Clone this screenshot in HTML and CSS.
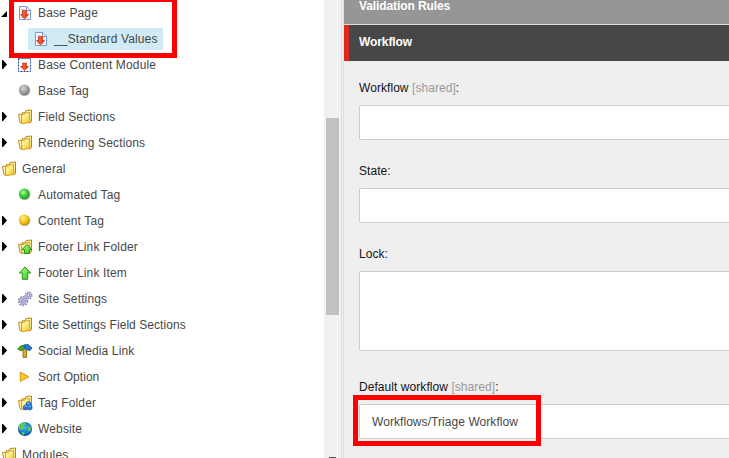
FILE: index.html
```html
<!DOCTYPE html>
<html lang="en">
<head>
<meta charset="utf-8">
<title>Content Editor</title>
<link rel="stylesheet" href="styles.css">
</head>
<body>
<svg class="defs" aria-hidden="true">
  <defs>
    <linearGradient id="gold" x1="0" y1="0" x2="1" y2="1"><stop offset="0" stop-color="#fffbd0"/><stop offset=".5" stop-color="#ffe878"/><stop offset="1" stop-color="#eeb814"/></linearGradient>
    <linearGradient id="red" x1="0" y1="0" x2="1" y2="0"><stop offset="0" stop-color="#d01c0c"/><stop offset=".45" stop-color="#ff6328"/><stop offset="1" stop-color="#b80d05"/></linearGradient>
    <linearGradient id="lime" x1="0" y1="0" x2="1" y2="1"><stop offset="0" stop-color="#b4ff78"/><stop offset="1" stop-color="#35c51d"/></linearGradient>
    <radialGradient id="grayBall" cx=".4" cy=".35" r=".65"><stop offset="0" stop-color="#d4d4d4"/><stop offset=".6" stop-color="#a0a0a0"/><stop offset="1" stop-color="#777"/></radialGradient>
    <radialGradient id="greenBall" cx=".4" cy=".35" r=".65"><stop offset="0" stop-color="#b2ff98"/><stop offset=".55" stop-color="#3dc838"/><stop offset="1" stop-color="#269628"/></radialGradient>
    <radialGradient id="goldBall" cx=".4" cy=".35" r=".65"><stop offset="0" stop-color="#fff49a"/><stop offset=".55" stop-color="#f9c51c"/><stop offset="1" stop-color="#c68a00"/></radialGradient>
    <radialGradient id="sea" cx=".5" cy=".4" r=".6"><stop offset="0" stop-color="#47b2f5"/><stop offset=".65" stop-color="#1679d3"/><stop offset="1" stop-color="#0b438e"/></radialGradient>
    <symbol id="page" viewBox="0 0 16 16">
      <path d="M2.500 1.500H10l3.500 3.500v9.500h-11z" fill="#f7f9fe" stroke="#8497c4"/>
      <path d="M9.500 1.500v4h4" fill="#dce5f6" stroke="#8497c4"/>
      <path d="M4 4.500h4M4 6.500h7M4 12.500h7" stroke="#c5cfe5"/>
      <path d="M5.500 5.500h4v4h2L7.500 14l-4-4.500h2z" fill="url(#red)" stroke="#c72110" stroke-width=".6"/>
    </symbol>
    <symbol id="module" viewBox="0 0 16 16">
      <path d="M1.500 1.500h12v13h-12z" fill="#fff" stroke="#1b4ba2" stroke-dasharray="2 1"/>
      <path d="M5.500 6h4v3.500h2l-4 4-4-4h2z" fill="url(#red)" stroke="#c72110" stroke-width=".6"/>
    </symbol>
    <symbol id="folder" viewBox="0 0 16 16">
      <path d="M1.500 5.500l3.500-.5v9.500l-2-1z" fill="#fff4b5" stroke="#c28a16"/>
      <path d="M5 4l3-.5 1-2L14.500 1v11.500L13 14z" fill="#fff0a0" stroke="#b98718"/>
      <path d="M4.500 5.500l3.300-.4 1-1.300 3.700-.3.500 10-8.300 1.200z" fill="url(#gold)" stroke="#cf9b1e" stroke-width=".9"/>
    </symbol>
    <symbol id="arrow" viewBox="0 0 16 16"><path d="M8 2l5.700 6h-3v6.300H5.300V8h-3z" fill="url(#lime)" stroke="#219320"/></symbol>
    <symbol id="upfolder" viewBox="0 0 16 16"><use href="#folder"/><path d="M10 5.500l4.800 5h-2.300v4h-5v-4H5.200z" fill="url(#lime)" stroke="#1c911d"/></symbol>
    <symbol id="tagfolder" viewBox="0 0 16 16"><use href="#folder"/><path d="M9 8l2.500-1.500L14 8v2.500l1 .5v3l-2.500 1-2-.8-2 .8L6.500 14v-3L9 10z" fill="#2675d7" stroke="#1456a9" stroke-width=".7"/><path d="M9.500 8.300l2-.8 2 .8-2 .8zM7.300 11.300l1.700-.8 1.500.8-1.500.7zM11.300 11.300l1.500-.8 1.700.8-1.700.7z" fill="#86bdfa"/></symbol>
    <symbol id="gray" viewBox="0 0 16 16"><ellipse cx="8" cy="8" rx="5.700" ry="5.300" fill="#bbb" opacity=".5"/><circle cx="7.300" cy="7" r="5.500" fill="url(#grayBall)"/></symbol>
    <symbol id="green" viewBox="0 0 16 16"><ellipse cx="8" cy="8" rx="5.700" ry="5.300" fill="#aaa" opacity=".5"/><circle cx="7.300" cy="7" r="5.500" fill="url(#greenBall)"/></symbol>
    <symbol id="yellow" viewBox="0 0 16 16"><ellipse cx="8" cy="8" rx="5.700" ry="5.300" fill="#aaa" opacity=".5"/><circle cx="7.300" cy="7" r="5.500" fill="url(#goldBall)"/></symbol>
    <symbol id="gears" viewBox="0 0 16 16">
      <circle cx="6" cy="10" r="4.300" fill="none" stroke="#8588b3" stroke-width="1.800" stroke-dasharray="1.700 1.100"/>
      <circle cx="6" cy="10" r="3.500" fill="#bfc2e4" stroke="#979ac5" stroke-width=".8"/><circle cx="6" cy="10" r="1.300" fill="#fff" stroke="#686c9c" stroke-width=".8"/>
      <circle cx="11.500" cy="4.500" r="3.300" fill="none" stroke="#8588b3" stroke-width="1.500" stroke-dasharray="1.400 .9"/>
      <circle cx="11.500" cy="4.500" r="2.700" fill="#c7caea" stroke="#979ac5" stroke-width=".8"/><circle cx="11.500" cy="4.500" r="1" fill="#fff" stroke="#686c9c" stroke-width=".7"/>
    </symbol>
    <symbol id="signs" viewBox="0 0 16 16">
      <path d="M6 3h3.500v11.500H6z" fill="#d9a928" stroke="#976611" stroke-width=".8"/>
      <path d="M.7 6l3-3.200L8 2v3.500L4 8z" fill="#45a82b" stroke="#267719" stroke-width=".8"/>
      <path d="M7 2l4-.5L15 5l-2 2.500-3.500-.7L7 4.500z" fill="#2179c8" stroke="#174e9a" stroke-width=".8"/>
    </symbol>
    <symbol id="play" viewBox="0 0 16 16"><path d="M3.300 3l8.500 4.800-8.500 4.700z" fill="#f9c82b" stroke="#d3940d"/></symbol>
    <symbol id="globe" viewBox="0 0 16 16"><circle cx="8" cy="8" r="7" fill="url(#sea)"/><path d="M2 5l3-3.200 3-.5 1 2-2 1.500.5 2-3 2.500L2 8zM11.500 4.500l2 1.500.5 2-1.500 3-1.300-1-.5-3zM4.500 10.500l3 1-.5 2.500-2-.8z" fill="#5fca4c"/></symbol>
  </defs>
</svg>
<div class="editor">
  <nav class="tree">
    <div class="item"><i class="open"></i><svg><use href="#page"/></svg><span>Base Page</span></div>
    <div class="item child"><div class="selected"><svg><use href="#page"/></svg><span>__Standard Values</span></div></div>
    <div class="item"><i class="closed"></i><svg><use href="#module"/></svg><span>Base Content Module</span></div>
    <div class="item"><i></i><svg><use href="#gray"/></svg><span>Base Tag</span></div>
    <div class="item"><i class="closed"></i><svg><use href="#folder"/></svg><span>Field Sections</span></div>
    <div class="item"><i class="closed"></i><svg><use href="#folder"/></svg><span>Rendering Sections</span></div>
    <div class="item root"><svg><use href="#folder"/></svg><span>General</span></div>
    <div class="item"><i></i><svg><use href="#green"/></svg><span>Automated Tag</span></div>
    <div class="item"><i class="closed"></i><svg><use href="#yellow"/></svg><span>Content Tag</span></div>
    <div class="item"><i class="closed"></i><svg><use href="#upfolder"/></svg><span>Footer Link Folder</span></div>
    <div class="item"><i></i><svg><use href="#arrow"/></svg><span>Footer Link Item</span></div>
    <div class="item"><i class="closed"></i><svg><use href="#gears"/></svg><span>Site Settings</span></div>
    <div class="item"><i class="closed"></i><svg><use href="#folder"/></svg><span class="snug">Site Settings Field Sections</span></div>
    <div class="item"><i class="closed"></i><svg><use href="#signs"/></svg><span>Social Media Link</span></div>
    <div class="item"><i class="closed"></i><svg><use href="#play"/></svg><span class="snug">Sort Option</span></div>
    <div class="item"><i class="closed"></i><svg><use href="#tagfolder"/></svg><span>Tag Folder</span></div>
    <div class="item"><i class="closed"></i><svg><use href="#globe"/></svg><span>Website</span></div>
    <div class="item root"><svg><use href="#folder"/></svg><span>Modules</span></div>
  </nav>
  <div class="scrollbar"><div class="thumb"></div><div class="down"></div></div>
  <div class="splitter"></div>
  <main class="fields">
    <h2 class="section">Validation Rules</h2>
    <h2 class="section active">Workflow</h2>
    <div class="field"><label>Workflow <em>[shared]</em>:</label><div class="input"></div></div>
    <div class="field"><label>State:</label><div class="input"></div></div>
    <div class="field"><label>Lock:</label><div class="input tall"></div></div>
    <div class="field"><label>Default workflow <em>[shared]</em>:</label><div class="input">Workflows/Triage Workflow</div></div>
  </main>
</div>
<div class="callout page-callout"></div>
<div class="callout workflow-callout"></div>
</body>
</html>
```
FILE: styles.css
```css
* { box-sizing: border-box; }
body { margin: 0; width: 729px; height: 458px; overflow: hidden; position: relative; font: 12px/16px "Liberation Sans", sans-serif; color: #474747; background: #fff; }
.defs { position: absolute; width: 0; height: 0; }
.editor { display: flex; height: 458px; overflow: hidden; }
.tree { width: 324px; flex: none; white-space: nowrap; letter-spacing: .14px; }
.snug { letter-spacing: .06px; }
.item { height: 26px; display: flex; align-items: center; padding-left: 2px; }
.item svg { width: 16px; height: 16px; flex: none; margin-right: 5px; }
.item i { width: 15px; height: 12px; flex: none; }
.item .closed::before { content: ""; display: block; width: 5px; height: 9px; margin-top: 1px; background: #000; clip-path: polygon(0 0, 20% 0, 100% 50%, 20% 100%, 0 100%); }
.item .open::before { content: ""; display: block; width: 6px; height: 6px; margin: 4px 0 0 -1px; background: #000; clip-path: polygon(100% 0, 100% 100%, 0 100%); }
.item.root { padding-left: 1px; }
.item.child { padding-left: 28px; }
.selected { display: flex; align-items: center; width: 135px; height: 22px; padding-left: 5px; background: #d0ebf6; }
.scrollbar { width: 17px; flex: none; padding: 118px 2px 0; background: #f1f1f1; display: flex; flex-direction: column; align-items: center; }
.thumb { width: 13px; height: 197px; background: #c1c1c1; }
.down { width: 7px; height: 1px; margin-top: 142px; background: #505050; }
.splitter { width: 3px; flex: none; background: #f0f0f0; border: solid #dedede; border-width: 0 1px; }
.fields { width: 385px; flex: none; background: #efefef; color: #131313; letter-spacing: .06px; }
.section { margin: 0; height: 25px; padding: 0 15px; font-size: 12px; line-height: 12px; letter-spacing: -.1px; color: #fff; background: #969696; border-bottom: 1px solid #dcdcdc; }
.section.active { height: 36px; line-height: 35px; padding-left: 10px; background: #474747; border: 0; border-left: 5px solid #dc291e; }
.field { padding: 11px 0 0 15px; margin-bottom: 12px; }
.section + .field { padding-top: 19px; }
label { display: block; margin-bottom: 9px; }
.input { width: 380px; height: 35px; padding-left: 12px; line-height: 34px; background: #fff; border: 1px solid #ccc; border-radius: 2px; color: #474747; }
.tall { height: 80px; margin-bottom: 17px; }
em { font-style: normal; color: #999; }
.callout { position: absolute; border: 5px solid #f00; }
.page-callout { left: 9px; top: -3px; width: 168px; height: 61px; }
.workflow-callout { left: 353px; top: 395px; width: 188px; height: 51px; }
```
